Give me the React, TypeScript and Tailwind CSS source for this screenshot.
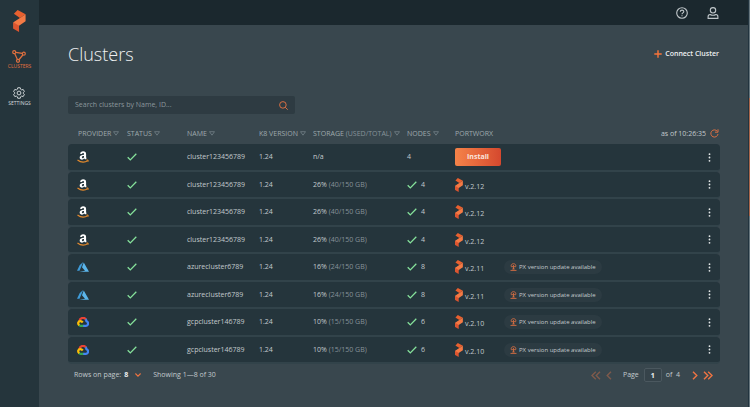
import type { ReactNode } from "react";

type Provider = "aws" | "azure" | "gcp";

type Cluster = {
  id: number;
  provider: Provider;
  name: string;
  used: string;
  total?: string;
  nodes: number;
  portworx?: string;
  update?: boolean;
};

const clusters: Cluster[] = [
  { id: 1, provider: "aws", name: "cluster123456789", used: "n/a", nodes: 4 },
  { id: 2, provider: "aws", name: "cluster123456789", used: "26%", total: "(40/150 GB)", nodes: 4, portworx: "v.2.12" },
  { id: 3, provider: "aws", name: "cluster123456789", used: "26%", total: "(40/150 GB)", nodes: 4, portworx: "v.2.12" },
  { id: 4, provider: "aws", name: "cluster123456789", used: "26%", total: "(40/150 GB)", nodes: 4, portworx: "v.2.12" },
  { id: 5, provider: "azure", name: "azurecluster6789", used: "16%", total: "(24/150 GB)", nodes: 8, portworx: "v.2.11", update: true },
  { id: 6, provider: "azure", name: "azurecluster6789", used: "16%", total: "(24/150 GB)", nodes: 8, portworx: "v.2.11", update: true },
  { id: 7, provider: "gcp", name: "gcpcluster146789", used: "10%", total: "(15/150 GB)", nodes: 6, portworx: "v.2.10", update: true },
  { id: 8, provider: "gcp", name: "gcpcluster146789", used: "10%", total: "(15/150 GB)", nodes: 6, portworx: "v.2.10", update: true },
];

// folded ribbon: top flap, diagonal band, bottom flap
function PortworxLogo({ className }: { className: string }) {
  return (
    <svg viewBox="0 0 26 47" className={className} aria-hidden="true">
      <path d="M1 8 9 0l17 9-12 8z" fill="#e8602f" />
      <path d="M26 9v15L12 33.500 0 40V26l14-9z" fill="#f47a45" />
      <path d="m0 26 12 7.500V47L0 40z" fill="#dd5530" />
    </svg>
  );
}

function ProviderIcon({ provider }: { provider: Provider }) {
  if (provider === "aws") {
    return (
      <svg viewBox="0 0 24 24" className="h-3 w-3" role="img" aria-label="Amazon">
        <path
          d="M6 5.500C6.500 2.300 9 .5 12.300.5c3.900 0 5.900 1.800 5.900 5.300V12c0 1.300.6 1.900 1.300 2.700L16.500 17.200c-.8-.6-1.400-1.300-1.800-2-3 3.700-9.400 2.600-9.400-2.100 0-4.200 3.800-5.700 8.700-5.800V6.300c0-1.500-.5-2.300-1.900-2.300-1.200 0-1.800.6-2.200 1.900zM14 9.900c-2.800 0-4.300.8-4.300 2.700 0 2.600 4.300 2.300 4.300-1.300z"
          fill="#fff"
        />
        <path d="M1 18c6.500 5 15 5 21 1" fill="none" stroke="#e58a2c" strokeWidth="2.200" />
        <path d="M18.500 18c4-1 5-.5 3.300 4" fill="none" stroke="#e58a2c" strokeWidth="1.500" />
      </svg>
    );
  }
  if (provider === "azure") {
    return (
      <svg viewBox="0 0 24 20" className="h-[10px] w-3" role="img" aria-label="Azure">
        <path d="M12.500 0 5.500 6 0 17.500h5z" fill="#3f9bd8" />
        <path d="m13.500 1 10.500 18.500H4.500l11.500-2-6-7z" fill="#5bb5ea" />
      </svg>
    );
  }
  return (
    <svg viewBox="0 0 24 20" className="h-[10px] w-3" fill="none" strokeWidth="4.500" role="img" aria-label="Google Cloud">
      <path d="M5 8C6 1.500 14-.5 18 5" stroke="#ea4335" />
      <path d="M17 4.500c1.500 1.500 2 2.500 2 4 4.500 1.500 4 9-1 9h-6" stroke="#4285f4" />
      <path d="M12.500 17.500H7c-1.500 0-2.500-.5-3.500-1.500" stroke="#34a853" />
      <path d="M4.500 16.500C1 13.500 2 8 7 8c2 0 3 1 4.500 3" stroke="#fbbc05" />
    </svg>
  );
}

function Check() {
  return (
    <svg viewBox="0 0 10 8" className="h-2 w-[10px] shrink-0" fill="none" stroke="#86e29b" strokeWidth="1.300" role="img" aria-label="Healthy">
      <path d="m.7 4.300 2.600 2.600L9.300.8" />
    </svg>
  );
}

function Chevron({ double, left }: { double?: boolean; left?: boolean }) {
  return (
    <svg
      viewBox="0 0 10 9"
      className={`h-[9px] w-[10px] ${left ? "rotate-180" : ""}`}
      fill="none"
      stroke="currentColor"
      strokeWidth="1.400"
      aria-hidden="true"
    >
      {double ? <path d="m1 .7 3.800 3.800L1 8.300M5.200.7 9 4.500 5.200 8.300" /> : <path d="m3 .7 3.800 3.800L3 8.300" />}
    </svg>
  );
}

function Heading({ children, sortable = true }: { children: ReactNode; sortable?: boolean }) {
  return (
    <th scope="col" className="p-0 text-left font-normal whitespace-nowrap">
      {sortable ? (
        <button className="flex items-center gap-[2px]">
          <span>{children}</span>
          <svg viewBox="0 0 6 5" className="h-[5px] w-[6px]" fill="none" stroke="#87949a" strokeWidth=".6" aria-hidden="true">
            <path d="M.5.700h5L3 4.200z" />
          </svg>
        </button>
      ) : (
        children
      )}
    </th>
  );
}

function ClusterRow({ cluster }: { cluster: Cluster }) {
  return (
    <tr className="odd:h-7 even:h-[27px] [&>td]:border-b-2 [&>td]:border-[#32434a] [&>td]:bg-[#25353c] [&>td]:p-0">
      <td className="rounded-l-sm">
        <div className="pl-[9px]">
          <ProviderIcon provider={cluster.provider} />
        </div>
      </td>
      <td>
        <Check />
      </td>
      <td>{cluster.name}</td>
      <td>1.24</td>
      <td className="whitespace-nowrap">
        {cluster.used} <span className="text-[#87939a]">{cluster.total}</span>
      </td>
      <td>
        <div className="flex items-center gap-1">
          {cluster.portworx && <Check />}
          {cluster.nodes}
        </div>
      </td>
      <td>
        {cluster.portworx ? (
          <div className="flex items-center gap-[2px]">
            <PortworxLogo className="h-[14px] w-2" />
            <span className="pt-1">{cluster.portworx}</span>
          </div>
        ) : (
          <button className="h-[18px] w-[46px] rounded-xs bg-linear-to-r from-[#f58349] to-[#d5482e] font-bold text-[#fbe4dc]">
            Install
          </button>
        )}
      </td>
      <td>
        {cluster.update && (
          <span className="inline-flex h-[14px] items-center gap-[2px] rounded-full bg-[#2c3b42] px-[6px] align-middle text-[6px] whitespace-nowrap">
            <svg viewBox="0 0 7 8" className="h-2 w-[7px]" fill="none" stroke="#d96f43" strokeWidth=".9" aria-hidden="true">
              <path d="M2.200 4.500C.5 3.500 1 .7 3.500.7s3 2.800 1.300 3.800M3.500 6V2.500M2.200 3.800l1.300-1.300 1.300 1.300M.5 7.400h6M2.300 6h2.400" />
            </svg>
            PX version update available
          </span>
        )}
      </td>
      <td className="rounded-r-sm">
        <button aria-label="Cluster actions" className="mr-2 ml-auto flex h-4 w-[5px] items-center justify-center">
          <svg viewBox="0 0 3 9" className="h-[9px] w-[3px]" fill="#e3e7e8" aria-hidden="true">
            <circle cx="1.500" cy="1.200" r=".9" />
            <circle cx="1.500" cy="4.500" r=".9" />
            <circle cx="1.500" cy="7.800" r=".9" />
          </svg>
        </button>
      </td>
    </tr>
  );
}

export default function App() {
  return (
    <div className="flex min-h-screen bg-[#39474e] font-['Open_Sans','Noto_Sans',sans-serif] text-[7px] leading-[10px] text-[#c3cacd]">
      <nav className="flex w-[39px] shrink-0 flex-col items-center bg-[#25353c] pt-[10px] text-[5px] leading-[7px]">
        <PortworxLogo className="h-[22px] w-[13px]" />
        <a href="#clusters" className="mt-[18px] flex flex-col items-center text-[#e0703f]">
          <svg viewBox="0 0 14 13" className="h-[13px] w-[14px]" fill="none" stroke="currentColor" strokeWidth="1.200" aria-hidden="true">
            <circle cx="2.200" cy="2.200" r="1.500" />
            <circle cx="11.800" cy="3.700" r="1.500" />
            <circle cx="6" cy="10.800" r="1.500" />
            <path d="m3.800 2.400 6.400 1M2.800 3.800l2.500 5.500M10.800 5 7.100 9.500" />
          </svg>
          CLUSTERS
        </a>
        <a href="#settings" className="mt-[17px] flex flex-col items-center gap-px text-[#d5dadc]">
          <svg viewBox="0 0 24 24" className="h-3 w-3" fill="none" stroke="currentColor" strokeWidth="1.900" aria-hidden="true">
            <path d="m9.500 1.500-.7 3-2.200 1.300-3-.9-2.400 4.200L3.400 11v2l-2.200 1.900 2.400 4.200 3-.9 2.200 1.300.7 3h5l.7-3 2.200-1.300 3 .9 2.400-4.200-2.200-1.900v-2l2.200-1.900-2.400-4.200-3 .9-2.200-1.300-.7-3z" />
            <circle cx="12" cy="12" r="3.800" />
          </svg>
          SETTINGS
        </a>
      </nav>

      <div className="flex min-w-0 flex-1 flex-col">
        <header className="flex h-[25px] items-center justify-end gap-[19px] bg-[#1b282e] pr-[29px] text-[#c0c7ca]">
          <button aria-label="Help">
            <svg viewBox="0 0 12 12" className="h-3 w-3" fill="none" stroke="currentColor" strokeWidth="1.100" aria-hidden="true">
              <circle cx="6" cy="6" r="5.300" />
              <path d="M4.300 4.800c0-2.300 3.500-2.200 3.500-.2C7.800 6 6 5.800 6 7.300M6 8.200v1" />
            </svg>
          </button>
          <button aria-label="Account">
            <svg viewBox="0 0 12 12" className="h-3 w-3" fill="none" stroke="currentColor" strokeWidth="1.100" aria-hidden="true">
              <circle cx="6" cy="3.300" r="2.700" />
              <path d="M1.100 11.400V9.800c0-1.500.7-2.300 2-2.300 1.800 1 4 1 5.800 0 1.300 0 2 .8 2 2.300v1.600z" />
            </svg>
          </button>
        </header>

        <main className="flex flex-col pt-[17px] pr-7 pl-[29px]">
          <div className="flex h-6 items-center justify-between">
            <h1 className="text-lg leading-6 font-light text-[#eef0f1]">Clusters</h1>
            <button className="flex items-center gap-[3px] pr-px font-semibold text-[#eef0f1]">
              <svg viewBox="0 0 8 8" className="h-2 w-2 text-[#f9743a]" fill="none" stroke="currentColor" strokeWidth="1.400" aria-hidden="true">
                <path d="M4 .3v7.400M.3 4h7.400" />
              </svg>
              Connect Cluster
            </button>
          </div>

          <label className="mt-[30px] flex h-[18px] w-[227px] items-center rounded-xs bg-[#2e3b42] px-[7px]">
            <input
              type="search"
              aria-label="Search clusters"
              placeholder="Search clusters by Name, ID..."
              className="min-w-0 flex-1 bg-transparent outline-none placeholder:text-[#8b979c]"
            />
            <svg viewBox="0 0 9 9" className="h-[9px] w-[9px]" fill="none" stroke="#d96f43" strokeWidth="1" aria-hidden="true">
              <circle cx="3.900" cy="3.900" r="3.300" />
              <path d="m6.300 6.300 2.400 2.400" />
            </svg>
          </label>

          <table className="mt-[9px] w-full table-fixed border-separate border-spacing-0">
            <colgroup>
              <col className="w-[59px]" />
              <col className="w-[60px]" />
              <col className="w-[72px]" />
              <col className="w-[54px]" />
              <col className="w-[94px]" />
              <col className="w-[48px]" />
              <col className="w-[49px]" />
              <col />
              <col className="w-[60px]" />
            </colgroup>
            <thead>
              <tr className="h-[21px] text-[#9ea9ad] [&>th:first-child]:pl-[10px]">
                <Heading>PROVIDER</Heading>
                <Heading>STATUS</Heading>
                <Heading>NAME</Heading>
                <Heading>K8 VERSION</Heading>
                <Heading>
                  STORAGE <span className="text-[#87939a]">(USED/TOTAL)</span>
                </Heading>
                <Heading>NODES</Heading>
                <Heading sortable={false}>PORTWORX</Heading>
                <th aria-label="Updates" />
                <th className="p-0 font-normal whitespace-nowrap text-[#c3cacd]">
                  <div className="flex items-center justify-end gap-1 pr-px">
                    as of 10:26:35
                    <button aria-label="Refresh">
                      <svg viewBox="0 0 9 9" className="h-[9px] w-[9px]" fill="none" stroke="#d96f43" strokeWidth="1" aria-hidden="true">
                        <path d="M7.300 2.300A3.600 3.600 0 1 0 8 5M8 .3v2.900H5" />
                      </svg>
                    </button>
                  </div>
                </th>
              </tr>
            </thead>
            <tbody>
              {clusters.map((cluster) => (
                <ClusterRow key={cluster.id} cluster={cluster} />
              ))}
            </tbody>
          </table>

          <footer className="mt-[3px] flex h-4 items-center justify-between pr-[7px] pl-[6px]">
            <div className="flex items-center">
              <label htmlFor="rows">Rows on page:</label>
              <div className="ml-[3px] grid items-center">
                <select id="rows" defaultValue="8" className="col-start-1 row-start-1 w-[17px] appearance-none bg-transparent font-bold text-[#eef0f1]">
                  <option>8</option>
                  <option>16</option>
                </select>
                <svg
                  viewBox="0 0 6 4"
                  className="pointer-events-none z-10 col-start-1 row-start-1 h-1 w-[6px] justify-self-end text-[#f07440]"
                  fill="none"
                  stroke="currentColor"
                  strokeWidth="1.100"
                  aria-hidden="true"
                >
                  <path d="m.4.500 2.600 2.600L5.600.5" />
                </svg>
              </div>
              <span className="ml-3">Showing 1—8 of 30</span>
            </div>
            <div className="flex items-center text-[#ee7443]">
              <button aria-label="First page" disabled className="text-[#7f5a4b]">
                <Chevron double left />
              </button>
              <button aria-label="Previous page" disabled className="ml-[3px] text-[#7f5a4b]">
                <Chevron left />
              </button>
              <label htmlFor="page" className="ml-[9px] text-[#c3cacd]">
                Page
              </label>
              <input
                id="page"
                defaultValue="1"
                className="mr-1 ml-[5px] h-[14px] w-[18px] rounded-xs border border-[#4b585f] bg-[#36434a] text-center font-bold text-[#eef0f1]"
              />
              <span className="mr-[10px] text-[#c3cacd]">of&nbsp; 4</span>
              <button aria-label="Next page">
                <Chevron />
              </button>
              <button aria-label="Last page" className="ml-[3px]">
                <Chevron double />
              </button>
            </div>
          </footer>
        </main>
      </div>

      {/* slim scroll track */}
      <div className="w-[2px] shrink-0 border-l border-[#22343f] bg-[#66757c] pt-[98px]">
        <div className="h-[118px] bg-[#a9664b]" />
      </div>
    </div>
  );
}
